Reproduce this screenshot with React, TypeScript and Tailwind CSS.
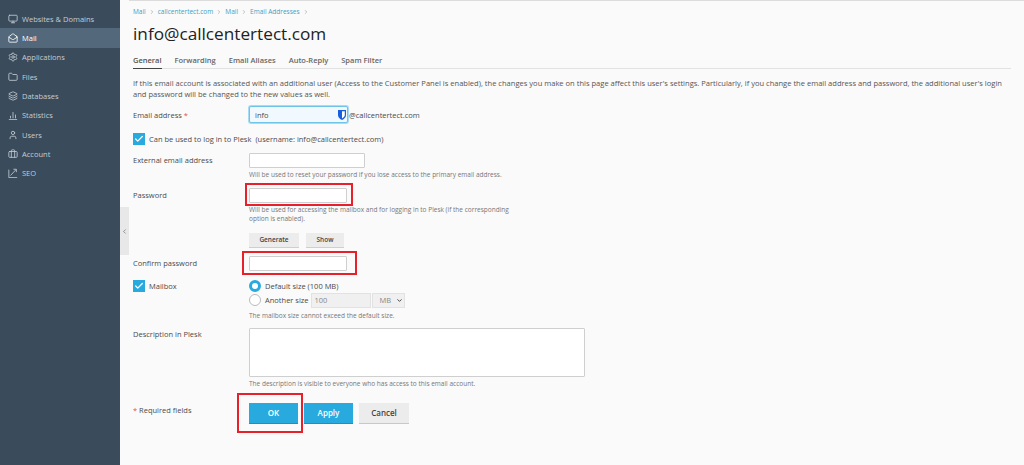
import {
  Monitor,
  MailOpen,
  Settings,
  Folder,
  Layers,
  User,
  Briefcase,
  Check,
  ChevronDown,
  ChevronLeft,
  ChevronRight,
} from "lucide-react";

function StatsIcon({ className }: { className?: string }) {
  return (
    <svg viewBox="0 0 12 12" fill="none" stroke="currentColor" strokeWidth="1" className={className}>
      <path d="M1 11.500h10M3 10V7M6 10V2.500M9 10V5.500" />
    </svg>
  );
}

function SeoIcon({ className }: { className?: string }) {
  return (
    <svg viewBox="0 0 12 12" fill="none" stroke="currentColor" strokeWidth="1" className={className}>
      <path d="M1 2v9.500h10M3 9l6.500-7M6.500 1.500h3.500V5" />
    </svg>
  );
}

const navigationItems = [
  { name: "Websites & Domains", icon: Monitor },
  { name: "Mail", icon: MailOpen, active: true },
  { name: "Applications", icon: Settings },
  { name: "Files", icon: Folder },
  { name: "Databases", icon: Layers },
  { name: "Statistics", icon: StatsIcon },
  { name: "Users", icon: User },
  { name: "Account", icon: Briefcase },
  { name: "SEO", icon: SeoIcon },
];

const tabs = ["General", "Forwarding", "Email Aliases", "Auto-Reply", "Spam Filter"];

function Checkbox() {
  return (
    <span className="w-[12px] h-[12px] bg-[#28aade] flex items-center justify-center shrink-0">
      <Check className="w-[10px] h-[10px] text-white" strokeWidth={3} />
    </span>
  );
}

function TextInput({ width }: { width: string }) {
  return <div className={`${width} h-[15px] bg-white border border-[#cfcfcf] rounded-[1px]`} />;
}

export default function App() {
  return (
    <div className="relative flex h-[465px] w-[1024px] overflow-hidden bg-[#fafafa] text-[#4a4a4a] font-['Open_Sans',sans-serif] text-[7.5px] leading-[10px]">
      {/* Sidebar */}
      <aside className="w-[120px] shrink-0 bg-[#3a4b5c] pt-[9px]">
        {navigationItems.map((item) => (
          <div
            key={item.name}
            className={`h-[19.33px] pl-[8px] flex items-center gap-[4px] text-[7.5px] ${
              item.active ? "bg-[#53687b] text-white" : "text-[#c4ccd3]"
            }`}
          >
            <item.icon className="w-[10px] h-[10px]" />
            <span>{item.name}</span>
          </div>
        ))}
      </aside>

      {/* Collapse handle */}
      <div className="w-[9px] shrink-0 pt-[207px]">
        <div className="h-[48px] bg-[#e8e8e8] flex items-center justify-center">
          <ChevronLeft className="w-[7px] h-[7px] text-[#555]" />
        </div>
      </div>

      {/* Main content */}
      <main className="flex-1 pl-[4px] pr-[13px] border-t border-[#dcdcdc]">
        <div className="flex items-center gap-[3px] h-[8px] mt-[7px] text-[6.5px] text-[#3e9fc4]">
          <span>Mail</span>
          <ChevronRight className="w-[6px] h-[6px] text-[#888]" />
          <span>callcentertect.com</span>
          <ChevronRight className="w-[6px] h-[6px] text-[#888]" />
          <span>Mail</span>
          <ChevronRight className="w-[6px] h-[6px] text-[#888]" />
          <span>Email Addresses</span>
          <ChevronRight className="w-[6px] h-[6px] text-[#888]" />
        </div>

        <h1 className="mt-[6px] h-[24px] text-[17.2px] leading-[24px] text-[#222]">info@callcentertect.com</h1>

        {/* Tabs */}
        <div className="mt-[7px] flex gap-[13px] border-b border-[#e2e2e2] h-[16px] text-[7.5px] font-semibold text-[#666]">
          {tabs.map((tab, i) => (
            <span key={tab} className={`h-[16px] pt-[2px] ${i === 0 ? "border-b border-[#444] text-[#555]" : ""}`}>
              {tab}
            </span>
          ))}
        </div>

        <p className="mt-[9px] w-[875px] text-[7.56px] leading-[10.5px] text-[#555]">
          If this email account is associated with an additional user (Access to the Customer Panel is enabled), the changes you make on this page affect this user's settings. Particularly, if you change the email address and password, the additional user's login and password will be changed to the new values as well.
        </p>

        {/* Email address */}
        <div className="mt-[7px] flex items-center h-[17px]">
          <label className="w-[116px]">
            Email address <span className="text-[#d9534f]">*</span>
          </label>
          <div className="w-[99px] h-[17px] bg-[#f2f9fe] border border-[#6fc4ea] ring-1 ring-[#a9dcf3] rounded-[2px] flex items-center justify-between pl-[5px] pr-[1px]">
            <span>info</span>
            <svg width="8" height="10" viewBox="0 0 8 10">
              <path d="M0 0h8v5c0 2.500-2 4-4 5-2-1-4-2.500-4-5z" fill="#175ddc" />
              <path d="M4 1.200h2.800v3.800c0 1.500-1.500 2.600-2.800 3.400z" fill="#fff" />
            </svg>
          </div>
          <span className="ml-[1px]">@callcentertect.com</span>
        </div>

        {/* Login checkbox */}
        <div className="mt-[9px] flex items-center h-[14px]">
          <Checkbox />
          <span className="ml-[4px]">Can be used to log in to Plesk</span>
          <span className="ml-[4px]">(username: info@callcentertect.com)</span>
        </div>

        {/* External email */}
        <div className="mt-[7px] flex items-center h-[15px]">
          <label className="w-[116px] pb-[2px]">External email address</label>
          <TextInput width="w-[116px]" />
        </div>
        <p className="ml-[116px] mt-[2px] text-[6.5px] text-[#777]">
          Will be used to reset your password if you lose access to the primary email address.
        </p>

        {/* Password */}
        <div className="mt-[8px] flex items-center h-[15px]">
          <label className="w-[116px] pb-[2px]">Password</label>
          <TextInput width="w-[98px]" />
        </div>
        <p className="ml-[116px] mt-[2px] w-[270px] text-[6.5px] leading-[9px] text-[#777]">
          Will be used for accessing the mailbox and for logging in to Plesk (if the corresponding option is enabled).
        </p>
        <div className="ml-[116px] mt-[10px] flex gap-[7px] font-semibold text-[6.5px] text-[#444]">
          <span className="w-[50px] h-[15px] bg-[#ececec] border-b border-[#cfcfcf] flex items-center justify-center">Generate</span>
          <span className="w-[38px] h-[15px] bg-[#ececec] border-b border-[#cfcfcf] flex items-center justify-center">Show</span>
        </div>

        {/* Confirm password */}
        <div className="mt-[8px] flex items-center h-[15px]">
          <label className="w-[116px] pb-[2px]">Confirm password</label>
          <TextInput width="w-[98px]" />
        </div>

        {/* Mailbox */}
        <div className="mt-[9px] flex">
          <div className="w-[116px] h-[12px] flex items-center">
            <Checkbox />
            <span className="ml-[4px]">Mailbox</span>
          </div>
          <div>
            <div className="flex items-center h-[12px] gap-[4px]">
              <span className="w-[12px] h-[12px] rounded-full border-[3px] border-[#28aade] bg-white" />
              <span>Default size (100 MB)</span>
            </div>
            <div className="mt-[1px] flex items-center h-[14px]">
              <span className="w-[12px] h-[12px] rounded-full border border-[#bbb] bg-white" />
              <span className="ml-[4px]">Another size</span>
              <span className="ml-[2px] w-[60px] h-[15px] bg-[#f0f0f0] border border-[#e2e2e2] pl-[3px] flex items-center text-[#888]">100</span>
              <span className="ml-[1px] w-[33px] h-[15px] bg-[#f0f0f0] border border-[#e2e2e2] pl-[7px] pr-[1px] flex items-center justify-between text-[#888]">
                MB
                <ChevronDown className="w-[7px] h-[7px] text-[#333]" strokeWidth={3} />
              </span>
            </div>
            <p className="mt-[4px] text-[6.5px] text-[#777]">The mailbox size cannot exceed the default size.</p>
          </div>
        </div>

        {/* Description */}
        <div className="mt-[7px] flex">
          <label className="w-[116px] pt-[1px]">Description in Plesk</label>
          <div className="w-[336px] h-[49px] bg-white border border-[#cfcfcf] rounded-[1px]" />
        </div>
        <p className="ml-[116px] mt-[2px] text-[6.5px] text-[#777]">
          The description is visible to everyone who has access to this email account.
        </p>

        {/* Actions */}
        <div className="mt-[14px] flex">
          <span className="w-[116px] pt-[2px]">
            <span className="text-[#d9534f]">*</span> Required fields
          </span>
          <div className="flex gap-[6px] font-semibold text-[8px]">
            <span className="w-[49px] h-[21px] bg-[#28aade] border-b border-[#1f8fbd] text-white flex items-center justify-center">OK</span>
            <span className="w-[49px] h-[21px] bg-[#28aade] border-b border-[#1f8fbd] text-white flex items-center justify-center">Apply</span>
            <span className="w-[50px] h-[21px] bg-[#ececec] border-b border-[#c8c8c8] text-[#444] flex items-center justify-center">Cancel</span>
          </div>
        </div>
      </main>

      {/* Red highlight boxes drawn over the screenshot */}
      <div className="absolute left-[245px] top-[183px] w-[108px] h-[23px] border-2 border-[#e8202a]" />
      <div className="absolute left-[242px] top-[251px] w-[115px] h-[24px] border-2 border-[#e8202a]" />
      <div className="absolute left-[237px] top-[393px] w-[66px] h-[40px] border-2 border-[#e8202a]" />
    </div>
  );
}
